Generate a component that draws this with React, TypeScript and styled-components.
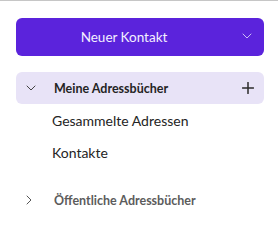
import React from "react";
import styled, { createGlobalStyle } from "styled-components";

const Global = createGlobalStyle`
  html, body { margin: 0; padding: 0; background: #ffffff; }
  body { font-family: Lato, "Open Sans", sans-serif; }
`;

const Pane = styled.div`
  width: 278px;
  height: 228px;
  box-sizing: border-box;
  border-top: 1px solid #c6c6c6;
  padding: 17px 14px 0 16px;
  display: flex;
  flex-direction: column;
`;

const SplitButton = styled.div`
  height: 38px;
  border-radius: 6px;
  background: #5b23dc;
  display: flex;
  align-items: stretch;
  color: #f4f0ff;
`;

const MainAction = styled.div`
  flex: 1;
  display: flex;
  align-items: center;
  justify-content: center;
  font-size: 13.5px;
  font-weight: 400;
  padding-left: 2px;
  padding-bottom: 1px;
`;

const MenuPart = styled.div`
  width: 33px;
  display: flex;
  align-items: center;
  justify-content: center;
  padding-right: 1px;
  padding-bottom: 3px;
`;

const Tree = styled.div`
  margin-top: 16px;
  display: flex;
  flex-direction: column;
`;

const GroupRow = styled.div<{ $active?: boolean; $gapTop?: number }>`
  height: 32px;
  border-radius: 6px;
  background: ${(p) => (p.$active ? "#e8e3f7" : "transparent")};
  margin-top: ${(p) => p.$gapTop ?? 0}px;
  display: flex;
  align-items: center;
  padding: 0 10px 0 8px;
`;

const Toggle = styled.span`
  width: 28px;
  display: flex;
  align-items: center;
  justify-content: flex-start;
  padding-left: 2px;
`;

const GroupLabel = styled.span<{ $muted?: boolean }>`
  flex: 1;
  font-size: 12.5px;
  font-weight: 700;
  color: ${(p) => (p.$muted ? "#5c5c5c" : "#242424")};
`;

const ItemRow = styled.div`
  height: 32px;
  display: flex;
  align-items: center;
  padding-left: 36px;
  font-size: 14px;
  color: #242424;
`;

const ChevronDown = ({ color }: { color: string }) => (
  <svg width="10" height="6" viewBox="0 0 10 6" fill="none">
    <path d="M1 1 L5 5 L9 1" stroke={color} strokeWidth="1" strokeLinecap="round" strokeLinejoin="round" />
  </svg>
);

const ChevronRight = ({ color }: { color: string }) => (
  <svg width="6" height="10" viewBox="0 0 6 10" fill="none">
    <path d="M1 1 L5 5 L1 9" stroke={color} strokeWidth="1" strokeLinecap="round" strokeLinejoin="round" />
  </svg>
);

const Plus = () => (
  <svg width="12" height="12" viewBox="0 0 12 12" fill="none">
    <path d="M6 0.5 V11.5 M0.5 6 H11.5" stroke="#2b2b2b" strokeWidth="1.5" strokeLinecap="round" />
  </svg>
);

export default function App() {
  return (
    <>
      <Global />
      <Pane>
        <SplitButton>
          <MainAction>Neuer Kontakt</MainAction>
          <MenuPart>
            <ChevronDown color="#cbbef5" />
          </MenuPart>
        </SplitButton>
        <Tree>
          <GroupRow $active>
            <Toggle>
              <ChevronDown color="#444" />
            </Toggle>
            <GroupLabel>Meine Adressbücher</GroupLabel>
            <Plus />
          </GroupRow>
          <ItemRow>Gesammelte Adressen</ItemRow>
          <ItemRow>Kontakte</ItemRow>
          <GroupRow $gapTop={16}>
            <Toggle>
              <ChevronRight color="#555" />
            </Toggle>
            <GroupLabel $muted>Öffentliche Adressbücher</GroupLabel>
          </GroupRow>
        </Tree>
      </Pane>
    </>
  );
}
